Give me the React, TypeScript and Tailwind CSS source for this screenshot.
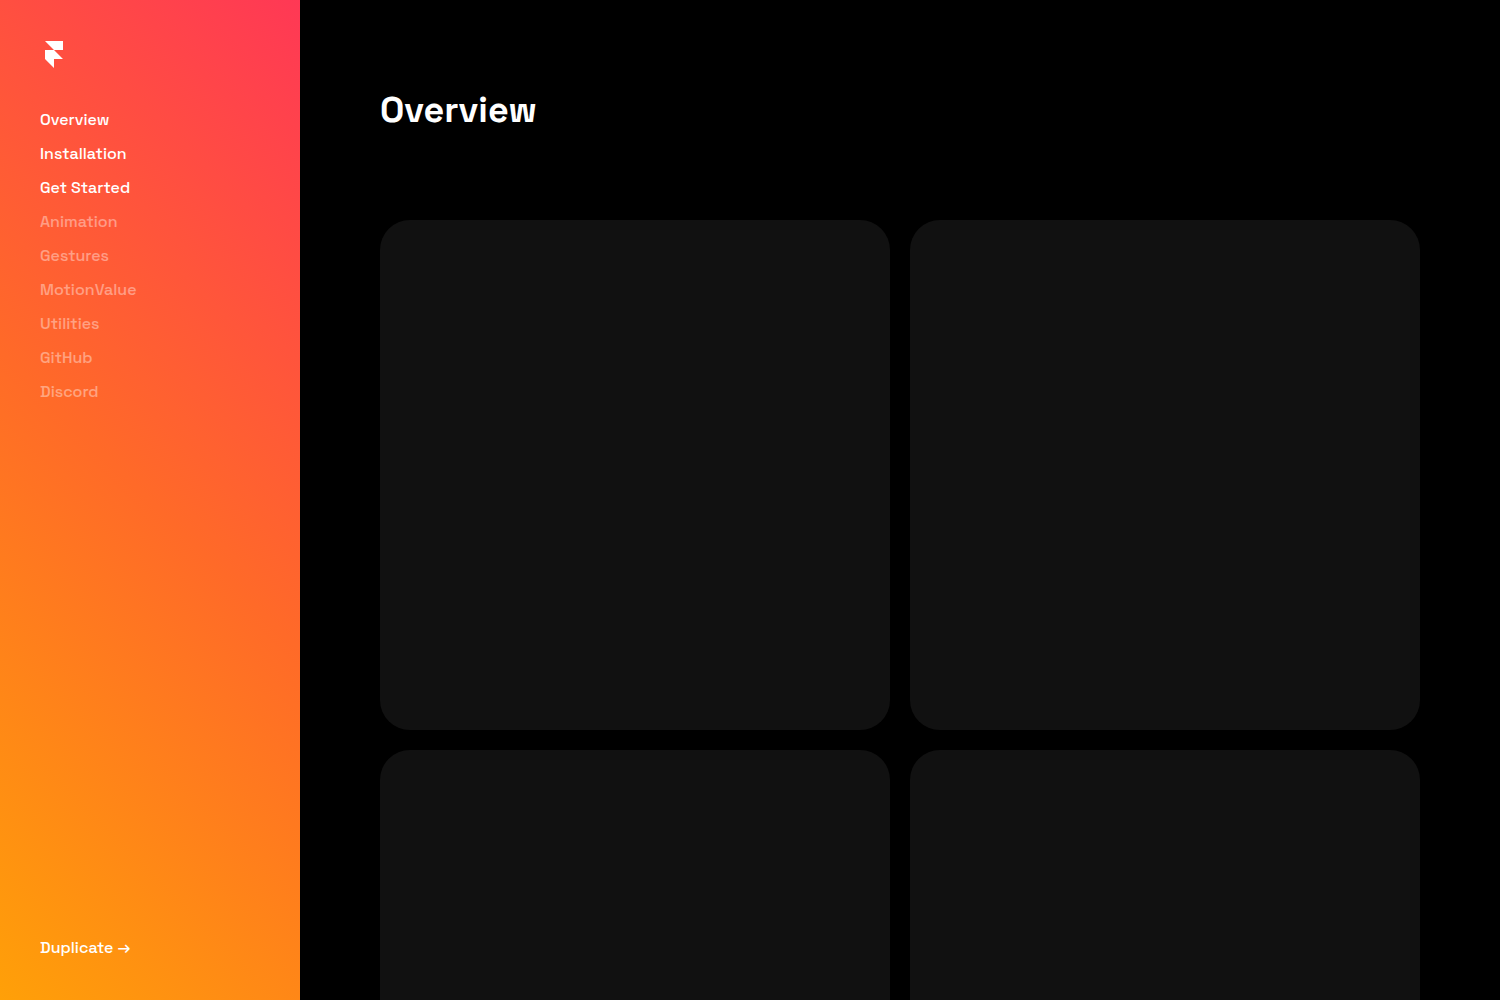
const links = [
  { label: "Overview", ready: true },
  { label: "Installation", ready: true },
  { label: "Get Started", ready: true },
  { label: "Animation", ready: false },
  { label: "Gestures", ready: false },
  { label: "MotionValue", ready: false },
  { label: "Utilities", ready: false },
  { label: "GitHub", ready: false },
  { label: "Discord", ready: false },
];

function Logo() {
  return (
    <svg viewBox="0 0 28 28" className="size-7" fill="currentColor" aria-hidden="true">
      <path d="M5 1h18v9h-9zM5 10h9l9 9h-9v9l-9-9z" />
    </svg>
  );
}

function Sidebar() {
  return (
    <aside className="flex w-[300px] shrink-0 flex-col items-start bg-[linear-gradient(225deg,#ff3855_0%,#ff6a28_50%,#ffa008_100%)] p-10 text-base font-medium text-white">
      <a href="#home" aria-label="Home">
        <Logo />
      </a>
      <nav className="mt-10">
        <ul className="flex flex-col gap-2.5">
          {links.map((link) => (
            <li key={link.label}>
              <a href={"#" + link.label} className={link.ready ? "block" : "block opacity-40"}>
                {link.label}
              </a>
            </li>
          ))}
        </ul>
      </nav>
      <a href="#duplicate" className="mt-auto">
        Duplicate →
      </a>
    </aside>
  );
}

export default function App() {
  return (
    <div className="flex h-screen bg-black font-['Space_Grotesk','Inter',sans-serif] text-white">
      <Sidebar />
      <main className="min-w-0 flex-1 overflow-y-auto p-20 [scrollbar-width:none]">
        <h1 className="text-4xl leading-[60px] font-semibold">Overview</h1>
        <div className="mt-20 grid grid-cols-2 gap-5">
          {[1, 2, 3, 4].map((card) => (
            <div key={card} className="aspect-square rounded-[30px] bg-[#111111]" />
          ))}
        </div>
      </main>
    </div>
  );
}
